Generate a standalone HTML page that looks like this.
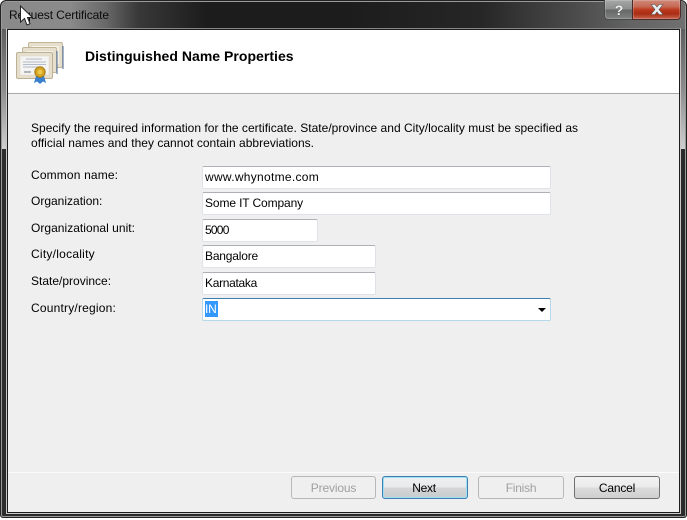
<!DOCTYPE html>
<html><head><meta charset="utf-8"><style>
html,body{margin:0;padding:0;width:687px;height:520px;overflow:hidden;background:#fff}
*{box-sizing:border-box}
#w{position:absolute;left:0;top:0;width:687px;height:520px;overflow:hidden;font-family:"Liberation Sans",sans-serif;font-size:12px;color:#000}
.a{position:absolute}
.t{position:absolute;white-space:nowrap;line-height:15px}
.in{position:absolute;background:#fff;border:1px solid #dfe3e8;border-top-color:#aeb0b5;border-radius:2px;height:23px;padding:2px 0 0 2px;line-height:16px;white-space:nowrap}
.b{position:absolute;top:476px;height:23px;border-radius:3px;text-align:center;line-height:23px;border:1px solid #707070;background:linear-gradient(#f2f2f2 0,#ebebeb 48%,#dcdcdc 52%,#cfcfcf 100%)}
.d{background:#efefef;border-color:#b5b8b8;color:#a0a0a0}
</style></head><body><div id="w">
<div class="a" style="left:0;top:0;width:687px;height:520px;background:#fff"></div>
<div class="a" style="left:0;top:0;width:687px;height:518px;border-radius:6px 6px 3px 3px;background:#2b2b2b;border:1px solid #222;box-shadow:inset 0 0 0 1px #9a9a9a"></div>
<div class="a" style="left:2px;top:2px;width:683px;height:27px;border-radius:4px 4px 0 0;background:linear-gradient(90deg,#8a8a8a 0,#8a8a8a 10%,#6a6a6a 15%,#383838 20%,#1c1c1c 30%,#1c1c1c 50%,#262626 70%,#4e4e4e 85%,#636363 92%,#707070 100%)"></div>
<div class="a" style="left:2px;top:29px;width:4px;height:120px;background:linear-gradient(#5e5e5e,#8c8c8c 50%,#cfcfcf)"></div>
<div class="a" style="left:681px;top:29px;width:4px;height:120px;background:linear-gradient(#5e5e5e,#8c8c8c 50%,#cfcfcf)"></div>
<div class="a" style="left:6px;top:28px;width:675px;height:486px;border:1px solid #c8c8c8;border-top-color:#888;background:#111"></div>
<div class="a" style="left:7px;top:29px;width:673px;height:484px;background:#efefef;border:1px solid #1c1c1c;border-top-width:1px"></div>
<div class="a" style="left:8px;top:30px;width:671px;height:63px;background:#fff"></div>
<div class="a" style="left:8px;top:93px;width:671px;height:1px;background:#a8a8a8"></div>
<div class="a" style="left:8px;top:472px;width:671px;height:1px;background:#fbfbfb"></div>

<div class="a" style="left:604px;top:0;width:29px;height:20px;border:1px solid #4a4a4a;border-top:0;border-right:0;border-radius:0 0 0 4px;background:linear-gradient(#a6a8a8 0,#8c8e8e 48%,#666868 52%,#808282 100%);box-shadow:inset 0 0 0 1px rgba(255,255,255,.2)"></div>
<div class="a" style="left:632px;top:0;width:49px;height:20px;border:1px solid #4a2a2a;border-top:0;border-radius:0 0 4px 0;background:linear-gradient(#cf8a7a 0,#c76a55 35%,#bd3a20 50%,#a92c14 72%,#c8644c 100%);box-shadow:inset 0 0 0 1px rgba(255,255,255,.2)"></div>
<div class="t" style="left:610px;top:2px;width:18px;text-align:center;font:bold 14px/16px 'Liberation Sans',sans-serif;color:#f2f2f2;text-shadow:0 0 1px #333">?</div>
<svg class="a" style="left:649px;top:3px" width="16" height="13" viewBox="0 0 16 13"><path d="M2 1.5H6L8 4L10 1.5H14L10 6.5L14 11.500H10L8 9L6 11.500H2L6 6.500Z" fill="#e8ecee" stroke="#555" stroke-width=".6"/></svg>

<div class="t" style="left:9px;top:8px;font-size:12px;letter-spacing:-.11px;color:#0c0c0c">Request Certificate</div>
<svg class="a" style="left:19px;top:5px" width="14" height="22" viewBox="0 0 14 22"><path d="M1.500 1V17L5.500 13.500L8 20L11 18.700L8.500 12.500H13.500Z" fill="#fff" stroke="#222" stroke-width="1"/></svg>

<svg class="a" style="left:15px;top:41px" width="50" height="45" viewBox="0 0 50 45">
<rect x="13.500" y="1.500" width="34" height="25" rx="1.500" fill="#e6dfcd" stroke="#c2b698"/>
<rect x="17" y="5" width="27" height="18" fill="#f5f1e6"/>
<path d="M48 5V28" stroke="#4a6a9c" fill="none" stroke-width="1"/>
<rect x="7.500" y="6.500" width="34" height="25" rx="1.500" fill="#e6dfcd" stroke="#c2b698"/>
<rect x="11" y="10" width="27" height="18" fill="#f5f1e6"/>
<path d="M42 10V33" stroke="#4a6a9c" fill="none" stroke-width="1"/>
<rect x="1.500" y="11.500" width="36" height="26" rx="1.500" fill="#e6dfcd" stroke="#bdb193"/>
<rect x="5" y="15" width="29" height="19" fill="#f4f4f2" stroke="#dcd6c6" stroke-width=".5"/>
<path d="M11 18H27M8 21H31M8 23.500H31M8 26H27" stroke="#b4bccb" stroke-width="1"/>
<path d="M9 31H16" stroke="#8b909a" stroke-width="1.300"/>
<path d="M21 35L19 42L22 40.500L25 43L28 40.500L31 42L29 35Z" fill="#3a80cf"/>
<circle cx="25" cy="31" r="5.200" fill="#d5a522" stroke="#a67a14"/>
<circle cx="25" cy="31" r="2.400" fill="#eec84e"/>
</svg>

<div class="t" style="left:85px;top:49px;font-size:14px;font-weight:bold;letter-spacing:.03px;color:#000">Distinguished Name Properties</div>

<div class="t" style="left:31px;top:121px;letter-spacing:.02px">Specify the required information for the certificate. State/province and City/locality must be specified as</div>
<div class="t" style="left:31px;top:136px;letter-spacing:.02px">official names and they cannot contain abbreviations.</div>
<div class="t" style="left:31px;top:168px;letter-spacing:.15px">Common name:</div>
<div class="t" style="left:31px;top:194px">Organization:</div>
<div class="t" style="left:31px;top:221px;letter-spacing:.03px">Organizational unit:</div>
<div class="t" style="left:31px;top:247px;letter-spacing:.25px">City/locality</div>
<div class="t" style="left:31px;top:274px">State/province:</div>
<div class="t" style="left:31px;top:301px;letter-spacing:.2px">Country/region:</div>

<div class="in" style="left:202px;top:166px;width:349px;letter-spacing:.29px">www.whynotme.com</div>
<div class="in" style="left:202px;top:192px;width:349px;letter-spacing:-.12px">Some IT Company</div>
<div class="in" style="left:202px;top:219px;width:116px;letter-spacing:-.77px">5000</div>
<div class="in" style="left:202px;top:245px;width:174px;letter-spacing:-.19px">Bangalore</div>
<div class="in" style="left:202px;top:272px;width:174px;letter-spacing:-.3px">Karnataka</div>
<div class="in" style="left:202px;top:298px;width:349px;border-color:#b5d8ea;border-top-color:#3c7fb1;padding:0"></div>
<div class="a" style="left:205px;top:301px;width:13px;height:16px;background:#3399ff"></div>
<div class="t" style="left:205px;top:302px;color:#fff;letter-spacing:-.2px">IN</div>
<svg class="a" style="left:538px;top:308px" width="9" height="5" viewBox="0 0 9 5"><path d="M0 0H8L4 4Z" fill="#000"/></svg>

<div class="b d" style="left:291px;width:85px;letter-spacing:-.15px">Previous</div>
<div class="b" style="left:382px;width:86px;border:1px solid #3c7fb1;box-shadow:inset 0 0 0 1px #9fe0f5;letter-spacing:-.27px;padding-right:2px;background:linear-gradient(#eef0f1 0,#e8eaeb 48%,#d4d6d7 52%,#c8cbcc 100%)">Next</div>
<div class="b d" style="left:478px;width:86px;letter-spacing:-.24px">Finish</div>
<div class="b" style="left:574px;width:86px;letter-spacing:-.2px">Cancel</div>
</div></body></html>
